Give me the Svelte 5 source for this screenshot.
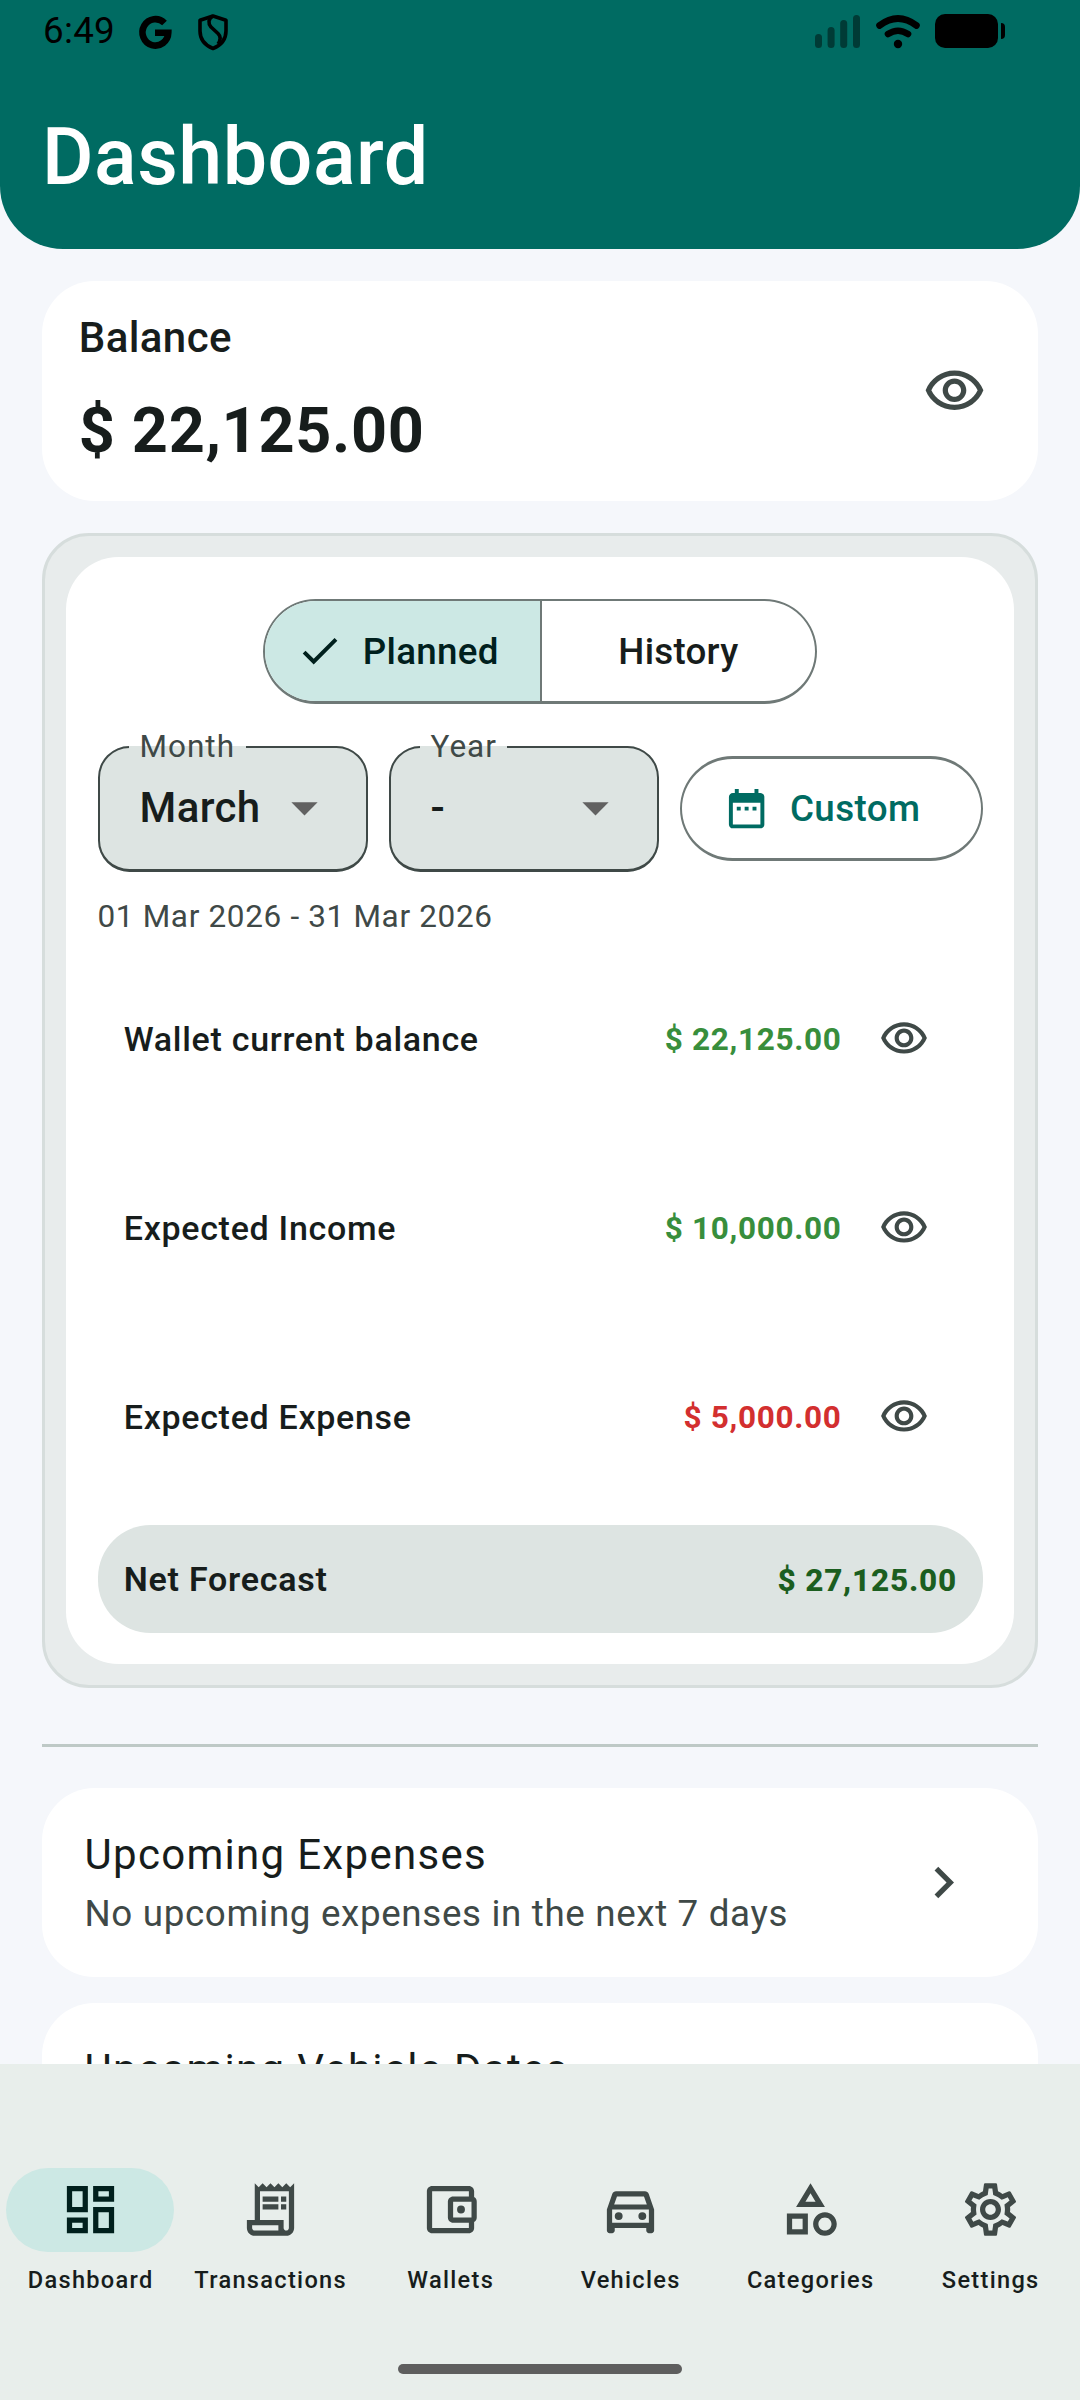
<script lang="ts">
  const icons = {
    eye: 'M12 6c3.79 0 7.17 2.13 8.82 5.5C19.17 14.87 15.79 17 12 17s-7.17-2.13-8.82-5.5C4.83 8.13 8.21 6 12 6m0-2C7 4 2.73 7.11 1 11.5 2.73 15.89 7 19 12 19s9.27-3.11 11-7.5C21.27 7.11 17 4 12 4zm0 5c1.38 0 2.5 1.12 2.5 2.5S13.38 14 12 14s-2.5-1.12-2.5-2.5S10.62 9 12 9m0-2c-2.48 0-4.5 2.02-4.5 4.5S9.52 16 12 16s4.5-2.02 4.5-4.5S14.48 7 12 7z',
    check: 'M9 16.17 4.83 12l-1.42 1.41L9 19 21 7l-1.41-1.41z',
    drop: 'M7 10l5 5 5-5z',
    calendar:
      'M9 11H7v2h2v-2zm4 0h-2v2h2v-2zm4 0h-2v2h2v-2zm2-7h-1V2h-2v2H8V2H6v2H5c-1.11 0-1.99.9-1.99 2L3 20c0 1.1.89 2 2 2h14c1.1 0 2-.9 2-2V6c0-1.1-.9-2-2-2zm0 16H5V9h14v11z',
    chevron: 'M10 6 8.59 7.41 13.17 12l-4.58 4.59L10 18l6-6z',
    dashboard:
      'M19 5v2h-4V5h4M9 5v6H5V5h4m10 8v6h-4v-6h4M9 17v2H5v-2h4M21 3h-8v6h8V3zM11 3H3v10h8V3zm10 8h-8v10h8V11zm-10 4H3v6h8v-6z',
    receipt:
      'M19.5 3.5 18 2l-1.5 1.5L15 2l-1.5 1.5L12 2l-1.5 1.5L9 2 7.5 3.5 6 2v14H3v3c0 1.66 1.34 3 3 3h12c1.66 0 3-1.34 3-3V2l-1.5 1.5zM15 20H6c-.55 0-1-.45-1-1v-1h10v2zm4-1c0 .55-.45 1-1 1s-1-.45-1-1v-3H8V5h11v14zM9 7h6v2H9zm7 0h2v2h-2zM9 10h6v2H9zm7 0h2v2h-2z',
    wallet:
      'M21 7.28V5c0-1.1-.9-2-2-2H5c-1.11 0-2 .9-2 2v14c0 1.1.89 2 2 2h14c1.1 0 2-.9 2-2v-2.28c.59-.35 1-.98 1-1.72V9c0-.74-.41-1.37-1-1.72zM20 9v6h-7V9h7zM5 19V5h14v2h-6c-1.1 0-2 .9-2 2v6c0 1.1.9 2 2 2h6v2H5z M16 10.5a1.5 1.5 0 1 0 0 3a1.5 1.5 0 1 0 0-3z',
    car: 'M18.92 6.01C18.72 5.42 18.16 5 17.5 5h-11c-.66 0-1.21.42-1.42 1.01L3 12v8c0 .55.45 1 1 1h1c.55 0 1-.45 1-1v-1h12v1c0 .55.45 1 1 1h1c.55 0 1-.45 1-1v-8l-2.08-5.99zM6.85 7h10.29l1.08 3.11H5.77L6.85 7zM19 17H5v-5h14v5z M7.5 13a1.5 1.5 0 1 0 0 3a1.5 1.5 0 1 0 0-3z M16.5 13a1.5 1.5 0 1 0 0 3a1.5 1.5 0 1 0 0-3z',
    category:
      'm12 2-5.5 9h11L12 2zm0 3.84L13.93 9h-3.87L12 5.84zM17.5 13c-2.49 0-4.5 2.01-4.5 4.5s2.01 4.5 4.5 4.5 4.5-2.01 4.5-4.5-2.01-4.5-4.5-4.5zm0 7c-1.38 0-2.5-1.12-2.5-2.5s1.12-2.5 2.5-2.5 2.5 1.12 2.5 2.5-1.12 2.5-2.5 2.5zM3 21.5h8v-8H3v8zm2-6h4v4H5v-4z',
    settings:
      'M19.43 12.98c.04-.32.07-.64.07-.98s-.03-.66-.07-.98l2.11-1.65c.19-.15.24-.42.12-.64l-2-3.46c-.09-.16-.26-.25-.44-.25-.06 0-.12.01-.17.03l-2.49 1c-.52-.4-1.08-.73-1.69-.98l-.38-2.65C14.46 2.18 14.25 2 14 2h-4c-.25 0-.46.18-.49.42l-.38 2.65c-.61.25-1.17.59-1.69.98l-2.49-1c-.06-.02-.12-.03-.18-.03-.17 0-.34.09-.43.25l-2 3.46c-.13.22-.07.49.12.64l2.11 1.65c-.04.32-.07.65-.07.98s.03.66.07.98l-2.11 1.65c-.19.15-.24.42-.12.64l2 3.46c.09.16.26.25.44.25.06 0 .12-.01.17-.03l2.49-1c.52.4 1.08.73 1.69.98l.38 2.65c.03.24.24.42.49.42h4c.25 0 .46-.18.49-.42l.38-2.65c.61-.25 1.17-.59 1.69-.98l2.49 1c.06.02.12.03.18.03.17 0 .34-.09.43-.25l2-3.46c.12-.22.07-.49-.12-.64l-2.11-1.65zm-1.98-1.71c.04.31.05.52.05.73 0 .21-.02.43-.05.73l-.14 1.13.89.7 1.08.84-.7 1.21-1.27-.51-1.04-.42-.9.68c-.43.32-.84.56-1.25.73l-1.06.43-.16 1.13-.2 1.35h-1.4l-.19-1.35-.16-1.13-1.06-.43c-.43-.18-.83-.41-1.23-.71l-.91-.7-1.06.43-1.27.51-.7-1.21 1.08-.84.89-.7-.14-1.13c-.03-.31-.05-.54-.05-.74s.02-.43.05-.73l.14-1.13-.89-.7-1.08-.84.7-1.21 1.27.51 1.04.42.9-.68c.43-.32.84-.56 1.25-.73l1.06-.43.16-1.13.2-1.35h1.39l.19 1.35.16 1.13 1.06.43c.43.18.83.41 1.23.71l.91.7 1.06-.43 1.27-.51.7 1.21-1.07.85-.89.7.14 1.13zM12 8c-2.21 0-4 1.79-4 4s1.79 4 4 4 4-1.79 4-4-1.79-4-4-4zm0 6c-1.1 0-2-.9-2-2s.9-2 2-2 2 .9 2 2-.9 2-2 2z'
  };

  const rows = [
    { label: 'Wallet current balance', amount: '$ 22,125.00', kind: 'income' },
    { label: 'Expected Income', amount: '$ 10,000.00', kind: 'income' },
    { label: 'Expected Expense', amount: '$ 5,000.00', kind: 'expense' }
  ];

  const tabs = [
    { label: 'Dashboard', icon: icons.dashboard },
    { label: 'Transactions', icon: icons.receipt },
    { label: 'Wallets', icon: icons.wallet },
    { label: 'Vehicles', icon: icons.car },
    { label: 'Categories', icon: icons.category },
    { label: 'Settings', icon: icons.settings }
  ];

  let activeTab = $state('Dashboard');
  let mode = $state('Planned');
</script>

{#snippet icon(path: string, size = 63)}
  <svg class="icon" width={size} height={size} viewBox="0 0 24 24" aria-hidden="true">
    <path d={path} />
  </svg>
{/snippet}

<div class="screen">
  <header>
    <div class="status">
      <span class="time">6:49</span>
      <svg class="google" width="33" height="34" viewBox="0 0 33 34">
        <path d="M25.5 8A12.9 13.2 0 1 0 29.3 17.7H16" />
      </svg>
      <svg class="shield" width="30" height="36" viewBox="0 0 30 36">
        <path d="M15 2 28 6.300V17C28 25.500 22.500 31.500 15 34.500C7.500 31.500 2 25.500 2 17V6.300Z" />
        <path d="M15 2C10 5 10 9.500 13 13L20 19.500C23.500 23 22.500 26.500 20 30" />
      </svg>
      <span class="spacer"></span>
      <svg class="signal" width="45" height="34" viewBox="0 0 45 34">
        <rect x="0" y="19" width="7" height="14" rx="3.500" />
        <rect x="12.600" y="12" width="7" height="21" rx="3.500" />
        <rect x="25.200" y="5" width="7" height="28" rx="3.500" />
        <rect x="38" y="0" width="7" height="33" rx="3.500" />
      </svg>
      <svg class="wifi" width="44" height="34" viewBox="0 0 44 34">
        <path d="M3.500 10.500Q22 -3.500 40.500 10.500" />
        <path d="M12 19Q22 12.500 32 19" />
        <circle cx="22" cy="29" r="4.200" />
      </svg>
      <svg class="battery" width="70" height="34" viewBox="0 0 70 34">
        <rect width="63" height="34" rx="10" />
        <path d="M66 9q4 0 4 4v8q0 4-4 4z" />
      </svg>
    </div>
    <h1>Dashboard</h1>
  </header>

  <main>
    <section class="card balance">
      <div>
        <div class="balance-label">Balance</div>
        <div class="balance-value">$ 22,125.00</div>
      </div>
      {@render icon(icons.eye)}
    </section>

    <section class="panel">
      <div class="panel-inner">
        <div class="segmented">
          {#each ['Planned', 'History'] as name}
            <button class:selected={mode === name} onclick={() => (mode = name)}>
              {#if mode === name}{@render icon(icons.check, 47.25)}{/if}
              <span>{name}</span>
            </button>
          {/each}
        </div>

        <div class="filters">
          <fieldset>
            <legend>Month</legend>
            <div class="field-value">March {@render icon(icons.drop)}</div>
          </fieldset>
          <fieldset>
            <legend>Year</legend>
            <div class="field-value">- {@render icon(icons.drop)}</div>
          </fieldset>
          <button class="custom">
            {@render icon(icons.calendar, 47.25)}
            <span>Custom</span>
          </button>
        </div>

        <div class="range">01 Mar 2026 - 31 Mar 2026</div>

        {#each rows as row}
          <div class="row">
            <span class="row-label">{row.label}</span>
            <span class="amount {row.kind}">{row.amount}</span>
            <span class="eye">{@render icon(icons.eye, 50)}</span>
          </div>
        {/each}

        <div class="net">
          <span>Net Forecast</span>
          <span class="net-amount">$ 27,125.00</span>
        </div>
      </div>
    </section>

    <hr />

    <section class="card upcoming">
      <div>
        <div class="upcoming-title">Upcoming Expenses</div>
        <div class="upcoming-sub">No upcoming expenses in the next 7 days</div>
      </div>
      {@render icon(icons.chevron)}
    </section>
    <section class="card upcoming">
      <div>
        <div class="upcoming-title">Upcoming Vehicle Dates</div>
      </div>
    </section>
  </main>

  <nav>
    <div class="tabs">
      {#each tabs as tab}
        <button class="tab" class:active={activeTab === tab.label} onclick={() => (activeTab = tab.label)}>
          <span class="pill">{@render icon(tab.icon)}</span>
          <span class="tab-label">{tab.label}</span>
        </button>
      {/each}
    </div>
    <div class="home-bar"></div>
  </nav>
</div>

<style>
  :global(body) {
    margin: 0;
    background: #f5f7fb;
  }
  .screen {
    width: 1080px;
    height: 2400px;
    display: flex;
    flex-direction: column;
    overflow: hidden;
    background: #f5f7fb;
    color: #171d1c;
    font-family: Roboto, sans-serif;
  }
  button {
    margin: 0;
    padding: 0;
    border: 0;
    background: none;
    font: inherit;
    color: inherit;
  }
  .icon {
    flex: none;
    display: block;
    fill: currentColor;
  }

  header {
    flex: none;
    height: 249px;
    box-sizing: border-box;
    background: #006b62;
    border-radius: 0 0 63px 63px;
  }
  .status {
    display: flex;
    height: 62px;
    box-sizing: border-box;
    padding: 14px 75px 0 43px;
    color: #000;
  }
  .status svg {
    flex: none;
    overflow: visible;
  }
  .time {
    width: 96px;
    margin-top: -5px;
    font-size: 36.75px;
    line-height: 43px;
    letter-spacing: 0.3px;
  }
  .google {
    margin-top: 1px;
    fill: none;
    stroke: #000;
    stroke-width: 6.6px;
  }
  .shield {
    margin-left: 26px;
    fill: none;
    stroke: #000;
    stroke-width: 3.6px;
    stroke-linejoin: round;
  }
  .spacer {
    flex: 1;
  }
  .signal {
    margin-top: 1px;
    fill: #003b36;
  }
  .wifi {
    margin: 1px 15px 0 16px;
    fill: none;
    stroke: #000;
    stroke-width: 6.6px;
    stroke-linecap: round;
  }
  .wifi circle {
    fill: #000;
    stroke: none;
  }
  h1 {
    margin: 47px 0 0 42px;
    font-size: 79px;
    line-height: 96px;
    font-weight: 500;
    letter-spacing: 0.5px;
    color: #fff;
  }

  main {
    flex: 1;
    min-height: 0;
    overflow: hidden;
    padding: 32px 42px 0;
  }
  .card {
    display: flex;
    justify-content: space-between;
    align-items: center;
    box-sizing: border-box;
    background: #fff;
    border-radius: 52.5px;
  }
  .card > .icon {
    color: #3f4947;
  }
  .balance {
    height: 220px;
    padding: 0 52.5px 7px 36.75px;
  }
  .balance > .icon {
    margin-top: 7px;
  }
  .balance-label {
    font-size: 42px;
    line-height: 60px;
    font-weight: 500;
    letter-spacing: 0.4px;
  }
  .balance-value {
    margin-top: 26px;
    font-size: 63px;
    line-height: 74px;
    font-weight: 700;
    letter-spacing: 0.65px;
  }

  .panel {
    margin-top: 32px;
    padding: 21px;
    border: 3px solid #d6dddc;
    border-radius: 47px;
    background: #e8ecec;
  }
  .panel-inner {
    padding: 42px 31.5px 31px;
    border-radius: 52.5px;
    background: #fff;
  }
  .segmented {
    display: flex;
    width: 553.5px;
    height: 105px;
    box-sizing: border-box;
    margin: 0 auto;
    border: 2px solid #6f7977;
    border-bottom-width: 3px;
    border-radius: 53px;
    overflow: hidden;
  }
  .segmented button {
    flex: none;
    width: 50%;
    box-sizing: border-box;
    display: flex;
    align-items: center;
    justify-content: center;
    gap: 20px;
    font-size: 36.75px;
    font-weight: 500;
    letter-spacing: 0.26px;
  }
  .segmented button + button {
    border-left: 2px solid #6f7977;
  }
  .segmented .selected {
    padding-right: 11px;
    background: #cce8e4;
    color: #00201d;
  }
  .filters {
    display: flex;
    margin-top: 42px;
  }
  fieldset {
    width: 270px;
    height: 146px;
    min-width: 0;
    box-sizing: border-box;
    margin: -20px 21px 0 0;
    padding: 0 29.5px;
    border: 2px solid #3f4947;
    border-bottom-width: 3px;
    border-radius: 31.5px;
    background: #dde4e2;
  }
  legend {
    padding: 0 10.5px;
    font-size: 31.5px;
    line-height: 42px;
    letter-spacing: 1px;
    color: #3f4947;
  }
  .field-value {
    display: flex;
    justify-content: space-between;
    align-items: center;
    height: 50px;
    margin-top: 14px;
    padding-left: 10.5px;
    font-size: 42px;
    font-weight: 500;
    letter-spacing: 0.4px;
  }
  .field-value .icon {
    color: #616161;
  }
  .custom {
    display: flex;
    align-items: center;
    justify-content: center;
    gap: 20px;
    flex: 1;
    height: 105px;
    box-sizing: border-box;
    margin-top: 10px;
    padding-right: 19px;
    border: 2px solid #6f7977;
    border-width: 3px 2px;
    border-radius: 53px;
    font-size: 36.75px;
    font-weight: 500;
    letter-spacing: 0.4px;
    color: #006b62;
  }
  .range {
    margin-top: 24px;
    font-size: 31.5px;
    line-height: 42px;
    letter-spacing: 0.66px;
    color: #3f4947;
  }
  .row {
    display: flex;
    align-items: center;
    height: 189px;
    padding: 0 15.75px 0 26.25px;
  }
  .range + .row {
    margin-top: 6px;
  }
  .row-label {
    flex: 1;
    font-size: 34px;
    font-weight: 500;
    letter-spacing: 0.7px;
  }
  .amount {
    padding-top: 2px;
    margin-right: -0.7px;
    font-size: 31.5px;
    font-weight: 700;
    letter-spacing: 0.67px;
  }
  .income {
    color: #388e3c;
  }
  .expense {
    color: #d32f2f;
  }
  .eye {
    display: flex;
    justify-content: center;
    width: 126px;
    color: #3f4947;
  }
  .net {
    display: flex;
    align-items: center;
    justify-content: space-between;
    height: 108px;
    margin-top: 14px;
    padding: 0 25.5px 0 26.25px;
    border-radius: 52.5px;
    background: #dde4e2;
    font-size: 34px;
    font-weight: 600;
    letter-spacing: 0.74px;
  }
  .net-amount {
    padding-top: 2px;
    font-size: 31.5px;
    font-weight: 800;
    letter-spacing: 0.8px;
    color: #1b5e20;
  }

  hr {
    height: 3px;
    margin: 56px 0 41px;
    border: 0;
    background: #bec9c6;
  }
  .upcoming {
    height: 189px;
    padding: 39px 63px 0 42.5px;
    align-items: flex-start;
  }
  .upcoming + .upcoming {
    margin-top: 26px;
  }
  .upcoming > .icon {
    margin-top: 24px;
  }
  .upcoming-title {
    font-size: 42px;
    line-height: 56px;
    letter-spacing: 1.3px;
  }
  .upcoming-sub {
    margin-top: 5px;
    font-size: 36.75px;
    line-height: 52px;
    letter-spacing: 0.65px;
    color: #3f4947;
  }

  nav {
    flex: none;
    display: flex;
    flex-direction: column;
    justify-content: space-between;
    align-items: center;
    height: 336px;
    box-sizing: border-box;
    padding: 104px 0 26px;
    background: #e8eeeb;
  }
  .tabs {
    display: flex;
    width: 100%;
  }
  .tab {
    flex: 1 0 0;
    min-width: 0;
    display: flex;
    flex-direction: column;
    align-items: center;
  }
  .pill {
    display: flex;
    align-items: center;
    justify-content: center;
    width: 168px;
    height: 84px;
    box-sizing: border-box;
    padding-bottom: 2px;
    border-radius: 42px;
    color: #3f4947;
  }
  .active .pill {
    background: #cce8e4;
    color: #00201d;
  }
  .tab-label {
    margin-top: 13px;
    font-size: 23.6px;
    line-height: 30px;
    font-weight: 500;
    letter-spacing: 1.3px;
    text-indent: 1.3px;
  }
  .home-bar {
    width: 284px;
    height: 10px;
    border-radius: 5px;
    background: #5e5e5e;
  }
</style>
